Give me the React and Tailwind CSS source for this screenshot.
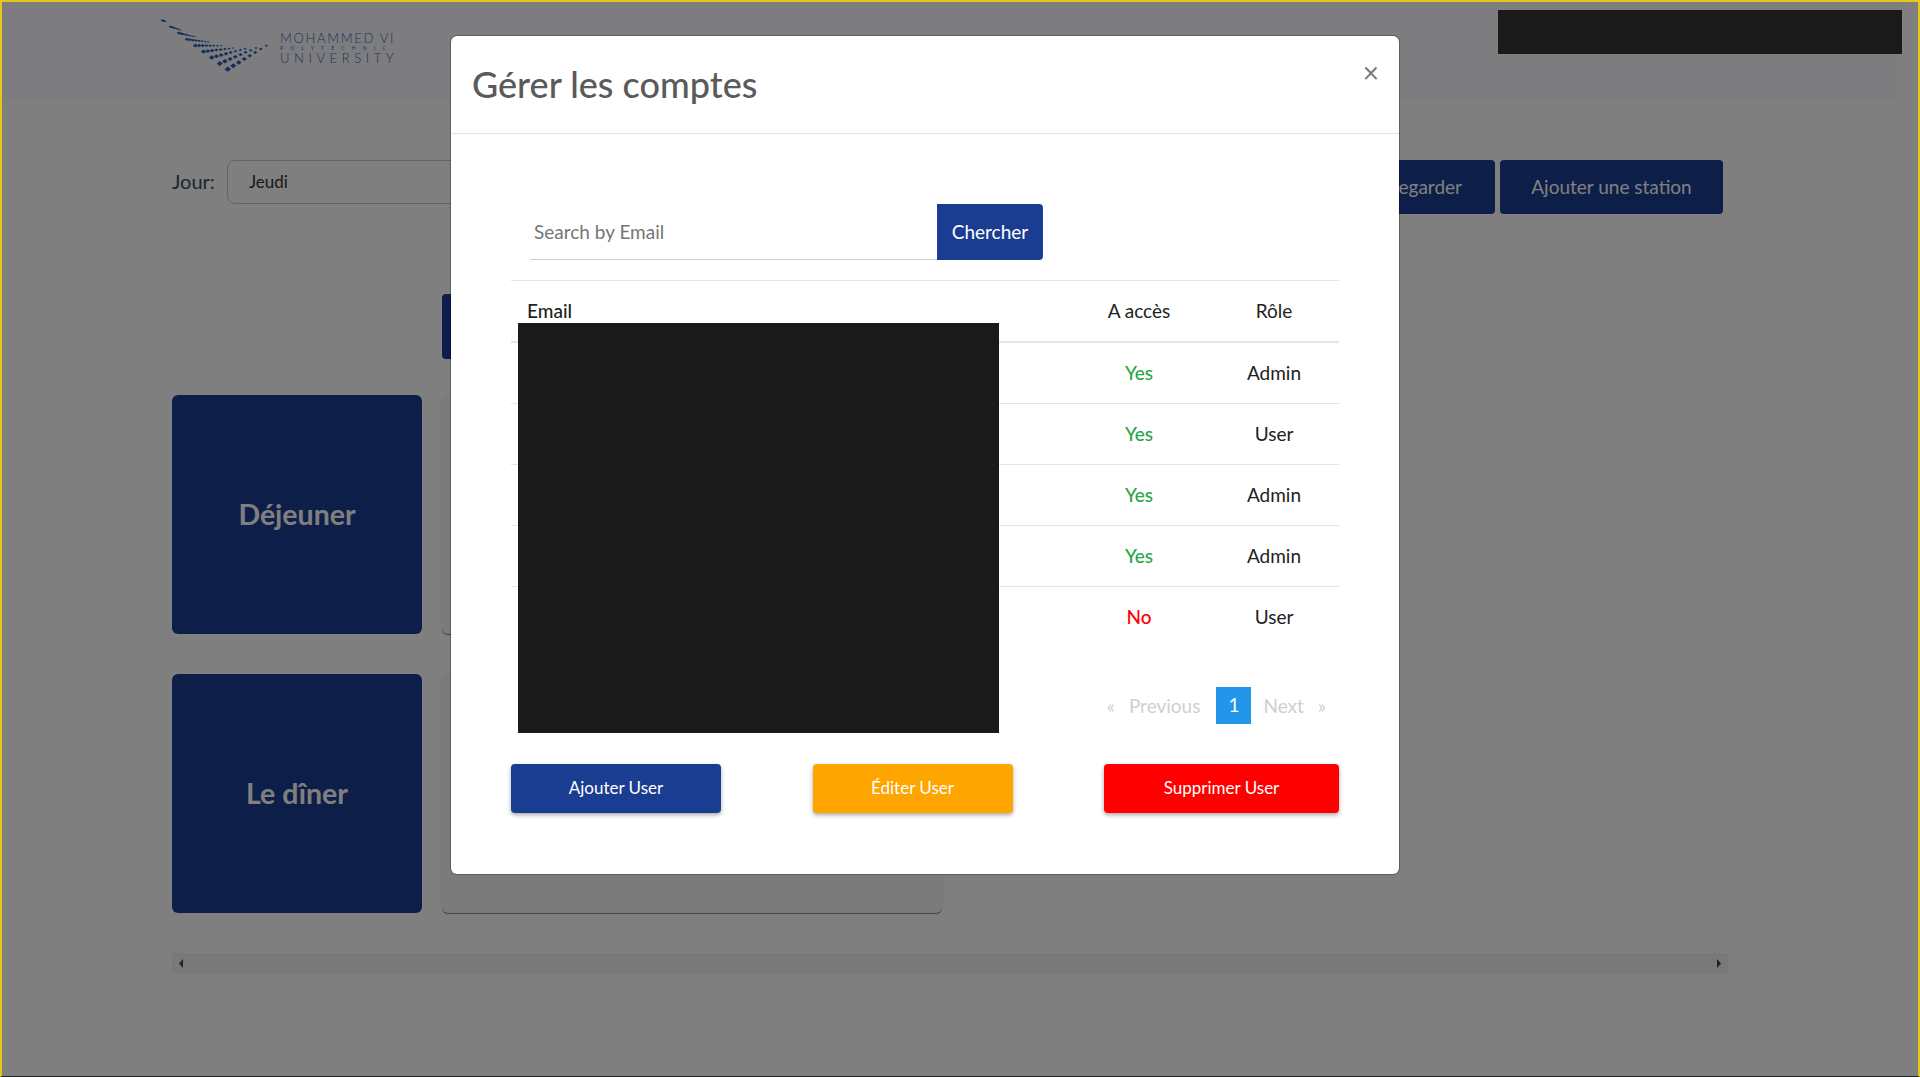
const rows = [
  { access: 'Yes', role: 'Admin' },
  { access: 'Yes', role: 'User' },
  { access: 'Yes', role: 'Admin' },
  { access: 'Yes', role: 'Admin' },
  { access: 'No', role: 'User' },
]

// Warped mesh of the logo: rows run from the straight left edge to the curved top edge
function LogoMark() {
  const cells = []
  const nu = 9
  const nv = 8
  for (let i = 0; i < nu; i++) {
    for (let j = 0; j < nv; j++) {
      const u = (i + 0.5) / nu
      const v = (j + 0.5) / nv
      const lx = 69 + (-2 - 69) * u
      const ly = 62 + (5 - 62) * u
      const rx = (1 - u) * (1 - u) * 114 + 2 * u * (1 - u) * 70 + u * u * -2
      const ry = (1 - u) * (1 - u) * 30 + 2 * u * (1 - u) * 50 + u * u * 5
      const x = lx + (rx - lx) * v
      const y = ly + (ry - ly) * v
      const w = 3.4 * (1 - 0.45 * u) * (1 - 0.5 * v)
      const h = 2.9 * (1 - 0.65 * u) * (1 - 0.65 * v)
      cells.push(<polygon key={i + '-' + j} points={`${x - w},${y} ${x},${y - h} ${x + w},${y} ${x},${y + h}`} />)
    }
  }
  return (
    <svg width="120" height="64" viewBox="0 0 120 64" fill="#2a5fb8" className="shrink-0 overflow-visible">
      {cells}
    </svg>
  )
}

function Logo() {
  return (
    <div className="flex items-center">
      <LogoMark />
      <div className="mt-[8px] flex w-[115px] flex-col text-[#3a6cb5]">
        <span className="text-[13px] leading-[13px] font-light tracking-[1.7px] whitespace-nowrap">MOHAMMED VI</span>
        <span className="text-[5px] leading-[7px] tracking-[7.2px] whitespace-nowrap">POLYTECHNIC</span>
        <span className="text-[13px] leading-[13px] font-light tracking-[4.6px] whitespace-nowrap">UNIVERSITY</span>
      </div>
    </div>
  )
}

function MealRow({ label }) {
  return (
    <div className="flex h-[239px] gap-5">
      <div className="flex w-[250px] items-center justify-center rounded-md bg-[#1b3d91] text-[28.5px] font-bold text-white">
        {label}
      </div>
      <div className="w-[500px] rounded-md bg-[#f5f7f5] shadow-[0_1px_1px_rgba(0,0,0,0.5)]" />
    </div>
  )
}

function Page() {
  return (
    <div className="h-full w-full bg-white">
      <div className="flex h-[98px] w-[1900px] items-start justify-between bg-[#fafbff] pl-[158px]">
        <div className="pt-[10px]">
          <Logo />
        </div>
        {/* Redacted block, not dimmed by the backdrop */}
        <div className="relative z-10 mt-[8px] h-[44px] w-[404px] bg-[#1a1a1a]" />
      </div>

      <div className="ml-[170px] w-[1556px]">
        <div className="mt-[60px] flex items-start">
          <div className="flex h-[44px] items-center">
            <span className="pb-[2px] text-[20px] text-[#3b4a66]">Jour:</span>
            <div className="ml-[12px] flex h-[44px] w-[400px] items-center rounded-lg border border-[#c8c8c8] bg-white pl-[21px] text-[17px] text-[#333]">
              Jeudi
            </div>
          </div>
          <div className="mr-[5px] ml-auto flex gap-[5px]">
            <button className="h-[54px] w-[200px] rounded bg-[#1b3d91] pr-[33px] text-right text-[19px] text-white">Regarder</button>
            <button className="h-[54px] w-[223px] rounded bg-[#1b3d91] text-[19px] text-white">Ajouter une station</button>
          </div>
        </div>

        <div className="mt-[80px] ml-[270px] h-[65px] w-[300px] rounded bg-[#1b3d91]" />

        <div className="mt-[36px] flex flex-col gap-[40px]">
          <MealRow label="Déjeuner" />
          <MealRow label="Le dîner" />
        </div>

        <div className="mt-[40px] flex h-[21px] items-center justify-between bg-[#f1f3f1] px-[7px]">
          <svg width="4" height="9" viewBox="0 0 4 9" fill="#444"><polygon points="4,0 4,9 0,4.5" /></svg>
          <svg width="4" height="9" viewBox="0 0 4 9" fill="#444"><polygon points="0,0 0,9 4,4.5" /></svg>
        </div>
      </div>
    </div>
  )
}

function Modal() {
  return (
    <div className="absolute top-[34px] left-[449px] w-[948px] rounded-md bg-white shadow-[0_0_0_1px_rgba(0,0,0,0.25)]">
      <div className="relative flex h-[98px] items-center border-b border-[#e3e3e8] pl-[21px]">
        <h2 className="pb-[2px] text-[36px] font-medium text-[#5a5a5a]">Gérer les comptes</h2>
        <span className="absolute top-[19px] right-[20px] text-[28px] leading-[34px] text-[#777]">×</span>
      </div>

      <div className="relative px-[60px] pt-[70px] pb-[61px]">
        <div className="flex h-[56px] pl-[19px]">
          <div className="flex w-[407px] items-center border-b border-[#cfcfcf] pt-[2px] pl-[4px] text-[19px] text-[#757575]">
            Search by Email
          </div>
          <button className="w-[106px] rounded-r bg-[#1b3d91] text-[19px] text-white">Chercher</button>
        </div>

        <table className="mt-[20px] w-full table-fixed border-t border-[#e3e3e8] text-[19px] text-[#222]">
          <thead>
            <tr className="h-[61px] border-b-2 border-[#e3e3e8]">
              <th className="pl-[16px] text-left font-medium">Email</th>
              <th className="w-[140px] font-normal">A accès</th>
              <th className="w-[130px] font-normal">Rôle</th>
            </tr>
          </thead>
          <tbody>
            {rows.map((row, i) => (
              <tr key={i} className={i === 0 ? 'h-[62px] border-b border-[#e3e3e8]' : i < rows.length - 1 ? 'h-[61px] border-b border-[#e3e3e8]' : 'h-[61px]'}>
                <td />
                <td className={row.access === 'Yes' ? 'text-center font-medium text-[#28a745]' : 'text-center font-medium text-[#ff0000]'}>
                  {row.access}
                </td>
                <td className="text-center">{row.role}</td>
              </tr>
            ))}
          </tbody>
        </table>

        <div className="mt-[39px] flex h-[37px] items-center justify-end pr-[13px] text-[19px] text-[#cfcfcf]">
          <span className="mr-[14px] pt-[2px]">«</span>
          <span className="pt-[2px]">Previous</span>
          <span className="mr-[12px] ml-[16px] flex h-[37px] w-[35px] items-center justify-center bg-[#2196eb] text-white">1</span>
          <span className="pt-[2px]">Next</span>
          <span className="ml-[14px] pt-[2px]">»</span>
        </div>

        <div className="mt-[40px] flex justify-between text-[17px] text-white">
          <button className="h-[49px] w-[210px] rounded bg-[#1b3d91] shadow-[0_2px_4px_rgba(0,0,0,0.35)]">Ajouter User</button>
          <button className="h-[49px] w-[200px] rounded bg-[#ffa500] shadow-[0_2px_4px_rgba(0,0,0,0.35)]">Éditer User</button>
          <button className="h-[49px] w-[235px] rounded bg-[#ff0000] shadow-[0_2px_4px_rgba(0,0,0,0.35)]">Supprimer User</button>
        </div>

        {/* Redacted email column */}
        <div className="absolute top-[189px] left-[67px] h-[410px] w-[481px] bg-[#1a1a1a]" />
      </div>
    </div>
  )
}

export default function App() {
  return (
    <div className="h-[1077px] w-full overflow-hidden border-x-2 border-t-2 border-b border-x-[#e6c619] border-t-[#e6c619] border-b-[#222] font-['Lato',sans-serif]">
      <div className="relative h-full w-full">
        <Page />
        <div className="absolute inset-0 bg-black/50" />
        <Modal />
      </div>
    </div>
  )
}
